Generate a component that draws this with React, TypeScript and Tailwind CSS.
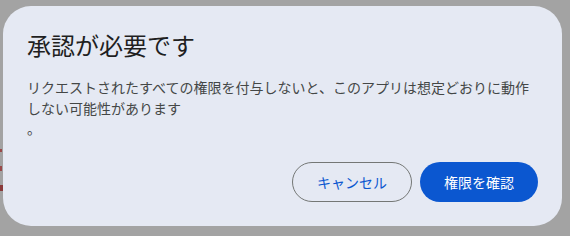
import React from "react";

export default function App() {
  const font = { fontFamily: '"Noto Sans CJK JP", "Noto Sans", sans-serif' };
  return (
    <div
      className="flex h-[236px] w-[570px] overflow-hidden bg-[#a3a3a3]"
      style={font}
    >
      <div className="flex w-[3px] shrink-0 flex-col gap-[14px] pt-[149px]">
        <div className="h-[3px] w-[2px] bg-[#9a4a4a]" />
        <div className="h-[5px] w-[2px] bg-[#9a4a4a]" />
        <div className="h-[6px] w-[3px] bg-[#8a3a3a]" />
      </div>
      <div className="mt-[6px] flex h-[220px] w-[559px] shrink-0 flex-col rounded-[28px] bg-[#e5e9f3] p-6">
        <h1 className="-mt-[1px] text-[24px] font-normal leading-8 text-[#1f1f1f]">
          承認が必要です
        </h1>
        <p className="mt-4 text-[14px] leading-[20.5px] text-[#444746]">
          リクエストされたすべての権限を付与しないと、このアプリは想定どおりに動作
          <br />
          しない可能性があります
          <br />。
        </p>
        <div className="mt-auto flex justify-end gap-2">
          <button className="h-10 rounded-full border border-[#747775] px-6 text-[14px] font-normal text-[#0b57d0]">
            キャンセル
          </button>
          <button className="h-10 rounded-full bg-[#0b57d0] px-6 text-[14px] font-normal text-white">
            権限を確認
          </button>
        </div>
      </div>
    </div>
  );
}
